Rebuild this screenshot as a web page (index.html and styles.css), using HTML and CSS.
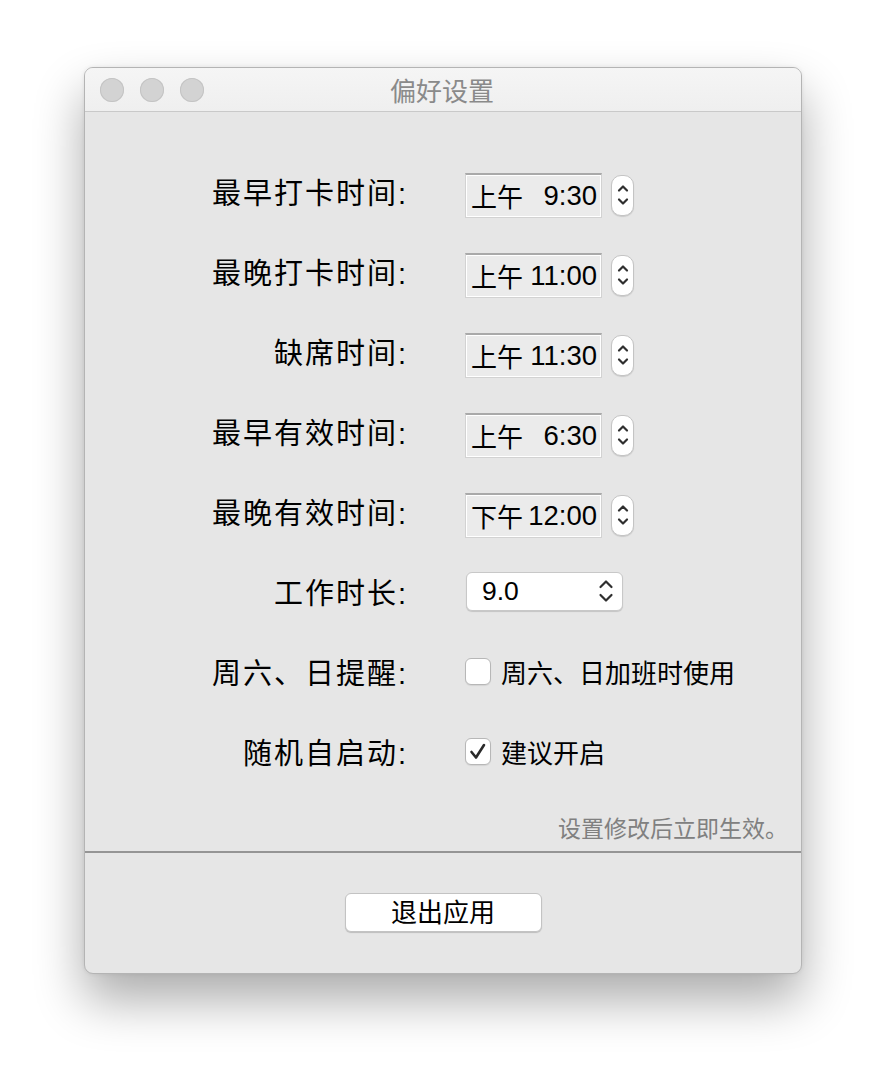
FILE: index.html
```html
<!DOCTYPE html>
<html lang="zh-CN">
<head>
<meta charset="utf-8">
<title>偏好设置</title>
<link rel="stylesheet" href="styles.css">
</head>
<body>
<div class="window">
  <div class="titlebar">
    <div class="lights">
      <span class="light"></span><span class="light"></span><span class="light"></span>
    </div>
    <div class="title">偏好设置</div>
  </div>
  <div class="content">
    <div class="form">
      <div class="label">最早打卡时间:</div>
      <div class="control">
        <div class="timefield"><span class="ampm">上午</span><span>9:30</span></div>
        <div class="stepper"><svg width="14" height="30" viewBox="0 0 14 30"><path d="M3 10.5 L7 6.5 L11 10.5" /><path d="M3 19.5 L7 23.5 L11 19.5" /></svg></div>
      </div>

      <div class="label">最晚打卡时间:</div>
      <div class="control">
        <div class="timefield"><span class="ampm">上午</span><span>11:00</span></div>
        <div class="stepper"><svg width="14" height="30" viewBox="0 0 14 30"><path d="M3 10.5 L7 6.5 L11 10.5" /><path d="M3 19.5 L7 23.5 L11 19.5" /></svg></div>
      </div>

      <div class="label">缺席时间:</div>
      <div class="control">
        <div class="timefield"><span class="ampm">上午</span><span>11:30</span></div>
        <div class="stepper"><svg width="14" height="30" viewBox="0 0 14 30"><path d="M3 10.5 L7 6.5 L11 10.5" /><path d="M3 19.5 L7 23.5 L11 19.5" /></svg></div>
      </div>

      <div class="label">最早有效时间:</div>
      <div class="control">
        <div class="timefield"><span class="ampm">上午</span><span>6:30</span></div>
        <div class="stepper"><svg width="14" height="30" viewBox="0 0 14 30"><path d="M3 10.5 L7 6.5 L11 10.5" /><path d="M3 19.5 L7 23.5 L11 19.5" /></svg></div>
      </div>

      <div class="label">最晚有效时间:</div>
      <div class="control">
        <div class="timefield"><span class="ampm">下午</span><span>12:00</span></div>
        <div class="stepper"><svg width="14" height="30" viewBox="0 0 14 30"><path d="M3 10.5 L7 6.5 L11 10.5" /><path d="M3 19.5 L7 23.5 L11 19.5" /></svg></div>
      </div>

      <div class="label">工作时长:</div>
      <div class="control">
        <div class="popup"><span>9.0</span><svg width="18" height="30" viewBox="0 0 18 30"><path d="M3.5 11 L9 5.5 L14.5 11" /><path d="M3.5 19 L9 24.5 L14.5 19" /></svg></div>
      </div>

      <div class="label">周六、日提醒:</div>
      <div class="control">
        <span class="checkbox"></span><span class="cbtext">周六、日加班时使用</span>
      </div>

      <div class="label">随机自启动:</div>
      <div class="control">
        <span class="checkbox"><svg width="26" height="27" viewBox="0 0 26 27"><path d="M6.5 14 L11 19.5 L19 7" /></svg></span><span class="cbtext">建议开启</span>
      </div>
    </div>
    <div class="note">设置修改后立即生效。</div>
  </div>
  <div class="footer">
    <button class="btn">退出应用</button>
  </div>
</div>
</body>
</html>
```

FILE: styles.css
```css
html, body {
  margin: 0;
  padding: 0;
  background: #ffffff;
}
body {
  font-family: "Liberation Sans", "Noto Sans CJK SC", sans-serif;
  color: #000;
  padding: 67px 0 100px 84px;
  min-height: 1074px;
  box-sizing: border-box;
}
.window {
  width: 718px;
  height: 907px;
  box-sizing: border-box;
  background: #e6e6e6;
  border: 1px solid #b4b4b4;
  border-radius: 9px;
  box-shadow: 0 26px 50px rgba(0, 0, 0, 0.33), 0 0 4px rgba(0, 0, 0, 0.08);
  display: flex;
  flex-direction: column;
  overflow: hidden;
}
.titlebar {
  height: 44px;
  flex: none;
  box-sizing: border-box;
  background: linear-gradient(#f5f5f5, #efefef);
  border-bottom: 1px solid #c9c9c9;
  position: relative;
  display: flex;
  align-items: center;
  justify-content: center;
}
.lights {
  position: absolute;
  left: 15px;
  top: 10px;
  display: flex;
  gap: 16px;
}
.light {
  width: 24px;
  height: 24px;
  border-radius: 50%;
  background: #d3d3d3;
  box-shadow: inset 0 0 0 1px #c4c4c4;
}
.title {
  font-size: 26px;
  color: #8a8a8a;
  margin-left: -2px;
}
.content {
  flex: 1;
  padding-top: 40px;
  display: flex;
  flex-direction: column;
  border-bottom: 2px solid #959595;
}
.form {
  display: grid;
  grid-template-columns: 321px 1fr;
  grid-auto-rows: 80px;
  column-gap: 59px;
}
.label {
  display: flex;
  align-items: center;
  justify-content: flex-end;
  font-size: 29px;
  letter-spacing: 2px;
  margin-right: -2px;
  padding-bottom: 2px;
}
.control {
  display: flex;
  align-items: center;
}
.timefield {
  width: 137px;
  height: 45px;
  margin-top: 6px;
  box-sizing: border-box;
  border: 1px solid #d2d2d2;
  border-top: 2px solid #a9a9a9;
  background: #ebebeb;
  box-shadow: inset 0 0 0 1px #ffffff;
  display: flex;
  align-items: center;
  justify-content: space-between;
  padding: 0 4px 0 5px;
  font-size: 27.5px;
}
.ampm {
  font-size: 26px;
}
.stepper {
  margin-left: 9px;
  margin-top: 6px;
  width: 23px;
  height: 41px;
  box-sizing: border-box;
  background: #fff;
  border: 1px solid #c4c4c4;
  border-radius: 10px;
  box-shadow: 0 1px 1px rgba(0, 0, 0, 0.12);
  display: flex;
  align-items: center;
  justify-content: center;
}
.stepper svg path, .popup svg path {
  fill: none;
  stroke: #2f2f2f;
  stroke-width: 2.2;
  stroke-linecap: round;
  stroke-linejoin: round;
}
.popup {
  margin-left: 1px;
  margin-bottom: 2px;
  width: 157px;
  height: 39px;
  box-sizing: border-box;
  background: #fff;
  border: 1px solid #c8c8c8;
  border-radius: 6px;
  box-shadow: 0 1px 1px rgba(0, 0, 0, 0.15);
  display: flex;
  align-items: center;
  justify-content: space-between;
  padding: 0 7px 0 15px;
  font-size: 26.5px;
}
.checkbox {
  width: 26px;
  height: 27px;
  box-sizing: border-box;
  background: #fff;
  border: 1px solid #b7b7b7;
  border-radius: 6px;
  box-shadow: 0 1px 1px rgba(0, 0, 0, 0.08);
  display: flex;
  align-items: center;
  justify-content: center;
  margin-left: 0;
  margin-bottom: 2px;
}
.checkbox svg {
  flex: none;
}
.checkbox svg path {
  fill: none;
  stroke: #2a2a2a;
  stroke-width: 2.6;
  stroke-linecap: round;
  stroke-linejoin: round;
}
.cbtext {
  margin-left: 10px;
  margin-bottom: 2px;
  font-size: 26px;
}
.note {
  margin-top: 18px;
  align-self: flex-end;
  margin-right: 13px;
  font-size: 23px;
  color: #808080;
}
.footer {
  height: 120px;
  flex: none;
  display: flex;
  justify-content: center;
  padding-top: 40px;
  box-sizing: border-box;
}
.btn {
  width: 197px;
  height: 39px;
  margin-left: 0;
  background: #fff;
  border: 1px solid #c3c3c3;
  border-radius: 6px;
  box-shadow: 0 1px 1px rgba(0, 0, 0, 0.18);
  font-family: "Liberation Sans", "Noto Sans CJK SC", sans-serif;
  font-size: 26px;
  color: #000;
  padding: 0;
  line-height: 1;
}
```
